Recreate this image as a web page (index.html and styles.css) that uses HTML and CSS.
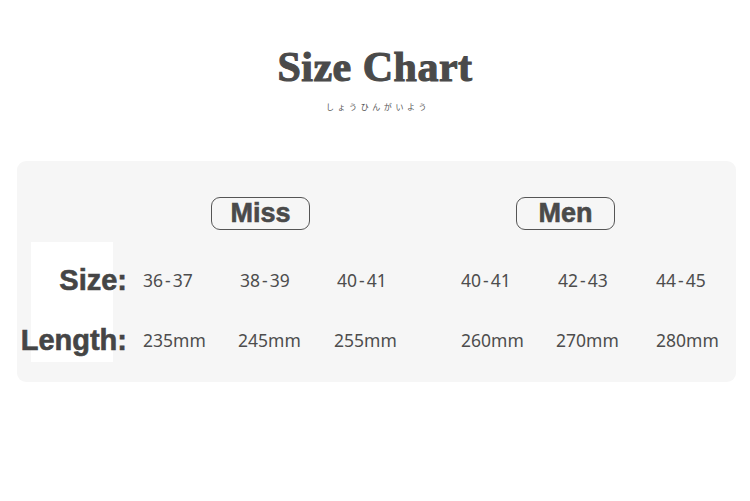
FILE: index.html
```html
<!DOCTYPE html>
<html>
<head>
<meta charset="utf-8">
<link rel="stylesheet" href="styles.css">
</head>
<body>
<header class="head">
  <h1 class="title">Size Chart</h1>
  <p class="sub">しょうひんがいよう</p>
</header>
<section class="panel">
  <div class="groups">
    <span class="pill">Miss</span>
    <span class="pill pill-men">Men</span>
  </div>
  <div class="table">
    <div class="label">Size:</div>
    <div class="val">36<span class="dash">-</span>37</div>
    <div class="val">38<span class="dash">-</span>39</div>
    <div class="val">40<span class="dash">-</span>41</div>
    <div class="val">40<span class="dash">-</span>41</div>
    <div class="val">42<span class="dash">-</span>43</div>
    <div class="val">44<span class="dash">-</span>45</div>
    <div class="label">Length:</div>
    <div class="val">235mm</div>
    <div class="val v2">245mm</div>
    <div class="val v3">255mm</div>
    <div class="val">260mm</div>
    <div class="val v2">270mm</div>
    <div class="val">280mm</div>
  </div>
</section>
</body>
</html>
```
FILE: styles.css
```css
html, body {
  margin: 0;
  padding: 0;
  background: #ffffff;
}
body {
  width: 750px;
  height: 501px;
  overflow: hidden;
  color: #4a4a4a;
}
.head {
  padding-top: 42px;
  text-align: center;
}
.title {
  margin: 0;
  font-family: "Liberation Serif", serif;
  font-weight: bold;
  font-size: 42px;
  line-height: 50px;
  color: #4a4a4a;
  letter-spacing: 0.5px;
  -webkit-text-stroke: 1.1px #4a4a4a;
}
.sub {
  margin: 10px 0 0 0;
  font-family: "Noto Sans CJK JP", sans-serif;
  font-size: 8px;
  line-height: 10px;
  letter-spacing: 3.6px;
  color: #555;
  padding-left: 6px;
}
.panel {
  margin: 49px 14px 0 17px;
  width: 719px;
  height: 221px;
  box-sizing: border-box;
  background: #f6f6f6;
  border-radius: 9px;
  padding: 36px 0 20px 14px;
}
.groups {
  display: flex;
  gap: 206px;
  padding-left: 180px;
  margin-bottom: 12px;
}
.pill {
  box-sizing: border-box;
  width: 99px;
  height: 33px;
  border: 1px solid #555;
  border-radius: 9px;
  display: flex;
  align-items: center;
  justify-content: center;
  font-family: "Liberation Sans", Arial, sans-serif;
  font-weight: bold;
  font-size: 27px;
  color: #4a4a4a;
  -webkit-text-stroke: 0.6px #4a4a4a;
}
.table {
  display: grid;
  grid-template-columns: 112px 97px 97px 124px 97px 98px 1fr;
  grid-auto-rows: 60px;
  background: linear-gradient(to right, #ffffff 82px, transparent 82px);
  background-repeat: no-repeat;
}
.label {
  font-family: "Liberation Sans", Arial, sans-serif;
  font-weight: bold;
  font-size: 29px;
  color: #454545;
  -webkit-text-stroke: 0.6px #454545;
  text-align: right;
  padding-right: 16px;
  padding-top: 16px;
  display: flex;
  align-items: center;
  justify-content: flex-end;
  white-space: nowrap;
}
.val {
  font-family: "Noto Sans", sans-serif;
  font-size: 17.5px;
  color: #4d4d4d;
  padding-top: 16px;
  display: flex;
  align-items: center;
  white-space: nowrap;
}
.dash {
  margin: 0 2px;
}
.v2 {
  margin-left: -2px;
}
.v3 {
  margin-left: -3px;
}
```
